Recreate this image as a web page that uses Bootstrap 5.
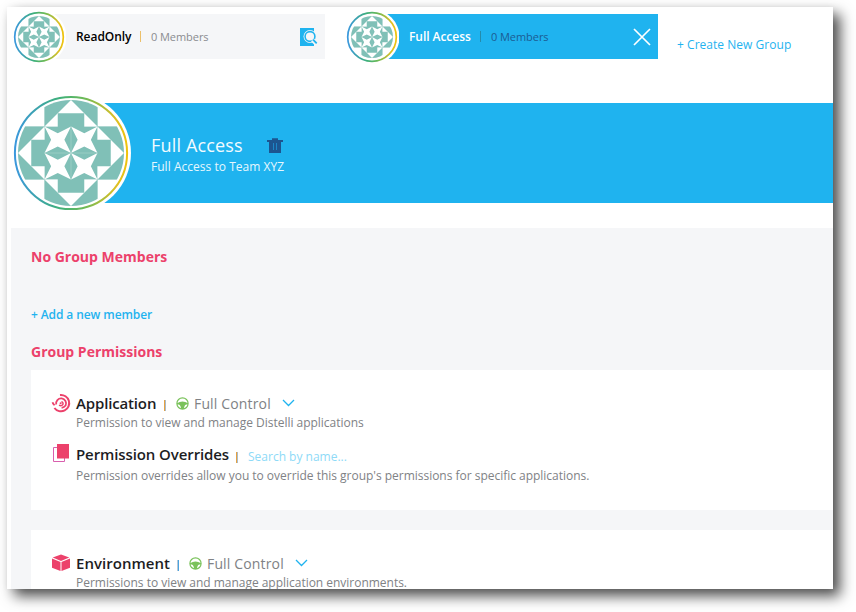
<!DOCTYPE html>
<html lang="en">
<head>
<meta charset="utf-8">
<title>Groups</title>
<link rel="stylesheet" href="https://cdn.jsdelivr.net/npm/bootstrap@5.3.0/dist/css/bootstrap.min.css">
<style>
  body { font: 12px/18px "Open Sans", "Noto Sans", sans-serif; width: 856px; height: 612px; overflow: hidden; background: #fff; color: #808285; white-space: nowrap; }
  .window { width: 826px; height: 582px; margin: 7px; box-shadow: 7px 7px 13px rgba(0,0,0,.7), 0 0 7px rgba(0,0,0,.04); }
  .tabs { height: 60px; padding-left: 5px; }
  .tab-item { height: 60px; }
  .tab-bar { height: 45px; margin: 7px 0 0 -27px; padding-left: 37px; }
  .face-sm { width: 55px; height: 55px; margin: 2px 0 0 -1px; z-index: 1; }
  .tab-one .tab-bar { width: 286px; background: #f5f6f8; color: #8a8c90; }
  .tab-two { margin-left: 20px; }
  .tab-two .tab-bar { width: 286px; background: #1fb3ef; color: #1c5c93; }
  .tab-name { font-weight: 600; width: 64px; letter-spacing: -.05px; }
  .tab-two .tab-name { width: 71px; }
  .tick { width: 1px; height: 11px; background: #ecc06a; }
  .tab-two .tick { background: #258bab; }
  .count { font-size: 11px; margin-left: 10px; letter-spacing: -.06px; }
  .find-icon, .close-icon { margin-right: 7px; }
  .blue { color: #1fb3ef; }
  .create { padding: 29px 0 0 19px; letter-spacing: .03px; }
  .hero { height: 120px; margin-top: 26px; padding-left: 4px; }
  .face-lg { width: 120px; height: 120px; z-index: 1; }
  .hero-bar { height: 100px; margin: 10px 0 0 -62px; padding: 31px 0 0 82px; background: #1fb3ef; }
  .hero-title { font-size: 18px; line-height: 23px; letter-spacing: .17px; color: #f2fbff; }
  .hero-sub { line-height: 20px; letter-spacing: .03px; color: #e6f7fe; }
  .panel { height: 361px; margin: 15px 0 0 4px; padding: 19px 0 0 20px; background: #f5f6f8; overflow: hidden; }
  .heading { font-size: 14px; line-height: 20px; font-weight: 700; color: #ec416b; margin: 0; }
  .add { font-weight: 600; line-height: 20px; margin: 38px 0 17px; letter-spacing: -.1px; }
  .sheet { background: #fff; height: 140px; padding: 24px 0 0 21px; margin-bottom: 20px; }
  .perm-icon { width: 20px; height: 20px; margin: 0 5px 2px -1px; }
  .perm-name { font-size: 15px; line-height: 20px; font-weight: 600; color: #1d1d1f; letter-spacing: -.15px; margin-bottom: 2px; width: 80px; }
  .perm-name.wide { width: 153px; letter-spacing: -.1px; }
  .perm-name.env { width: 94px; letter-spacing: .03px; }
  .perm-row { height: 20px; }
  .perm-row .tick { width: 2px; margin: 2px 10px 0 8px; background: linear-gradient(90deg, #e6a243 50%, #a9bccb 50%); }
  .perm-row .wide + .tick { margin-left: 7px; }
  .perm-row .env + .tick { margin-left: 7px; background: linear-gradient(90deg, #b9c9d6 50%, #4aa3e0 50%); }
  .wheel { width: 13px; height: 13px; margin-bottom: 2px; }
  .chevron { width: 13px; height: 8px; margin-bottom: 2px; }
  .perm-level { font-size: 14px; letter-spacing: .15px; margin: 0 11px 0 5px; }
  .perm-desc { padding-left: 24px; letter-spacing: -.02px; }
  .overrides { margin-top: 13px; }
  .overrides .perm-desc { margin-top: 2px; }
  .search { color: #8edaf7; margin-top: 4px; }
</style>
</head>
<body>
<svg width="0" height="0" class="d-block">
  <defs>
    <linearGradient id="ring" x1="0" y1="0" x2="1" y2="0">
      <stop offset="0" stop-color="#3b98dd"/><stop offset=".4" stop-color="#3fb07a"/><stop offset=".62" stop-color="#6dba57"/><stop offset=".9" stop-color="#dcbf25"/><stop offset="1" stop-color="#efc30d"/>
    </linearGradient>
    <clipPath id="round"><circle cx="8" cy="8" r="8"/></clipPath>
    <g id="quarter">
      <path fill="#80c0b7" d="M4 0h8v4h-8z"/>
      <path fill="#fff" d="M8 0l4 4H4z"/>
      <path fill="#80c0b7" d="M6 2h4v2.2h-4z"/>
    </g>
    <path id="star" fill="#fff" d="M0 0L2 1 4 0 3 2 4 4 2 3 0 4 1 2z"/>
    <g id="quilt" clip-path="url(#round)">
      <path fill="#80c0b7" d="M4 4h8v8h-8z"/>
      <use href="#quarter"/><use href="#quarter" transform="rotate(90 8 8)"/><use href="#quarter" transform="rotate(180 8 8)"/><use href="#quarter" transform="rotate(270 8 8)"/>
      <use href="#star" x="4" y="4"/><use href="#star" x="8" y="4"/><use href="#star" x="4" y="8"/><use href="#star" x="8" y="8"/>
      <path d="M4 0v4M12 0v4M4 12v4M12 12v4M0 4h4M12 4h4M0 12h4M12 12h4M4 8h8M8 4v8" stroke="#a6d3cc" stroke-width=".1"/>
    </g>
    <symbol id="wheel" viewBox="0 0 13 13">
      <circle cx="6.5" cy="6.5" r="5.6" fill="none" stroke="#7ac25b" stroke-width="1.2"/>
      <path fill="#7ac25b" d="M1 6.2Q6.5 2.8 12 6.2V7.6H10.2Q8.2 8.2 7.9 12H5.1Q4.8 8.2 2.8 7.6H1z"/>
    </symbol>
    <symbol id="chevron" viewBox="0 0 13 8"><path d="M1 1l5.5 5.5L12 1" fill="none" stroke="#1fb3ef" stroke-width="1.3"/></symbol>
  </defs>
</svg>

<main class="window bg-white overflow-visible">
  <nav class="tabs d-flex align-items-start">
    <div class="tab-item tab-one d-flex align-items-start">
      <svg class="face-sm position-relative flex-shrink-0" viewBox="0 0 55 55"><circle cx="28" cy="28" r="27.5" fill="#fff"/><circle cx="28" cy="28" r="24.3" fill="none" stroke="url(#ring)" stroke-width="1.7"/><use href="#quilt" transform="translate(7 7) scale(2.625)"/></svg>
      <div class="tab-bar d-flex align-items-center">
        <span class="tab-name text-black">ReadOnly</span><span class="tick"></span><span class="count">0 Members</span>
        <svg class="find-icon ms-auto" width="18" height="18" viewBox="0 0 18 18"><path fill="#1fb3ef" d="M0 0h14v18H0z"/><circle cx="10" cy="8.5" r="6.5" fill="#f5f6f8"/><circle cx="10" cy="8.5" r="4.9" fill="none" stroke="#1fb3ef" stroke-width="1.6"/><path d="M12.5 12l4 4" stroke="#f5f6f8" stroke-width="4"/><path d="M13 11.7l3.7 3.7" stroke="#1fb3ef" stroke-width="1.8"/></svg>
      </div>
    </div>
    <div class="tab-item tab-two d-flex align-items-start">
      <svg class="face-sm position-relative flex-shrink-0" viewBox="0 0 55 55"><circle cx="28" cy="28" r="27.5" fill="#fff"/><circle cx="28" cy="28" r="24.3" fill="none" stroke="url(#ring)" stroke-width="1.7"/><use href="#quilt" transform="translate(7 7) scale(2.625)"/></svg>
      <div class="tab-bar d-flex align-items-center">
        <span class="tab-name text-white">Full Access</span><span class="tick"></span><span class="count">0 Members</span>
        <svg class="close-icon ms-auto" width="18" height="18" viewBox="0 0 18 18"><path d="M1 1l16 16M17 1L1 17" stroke="#fff" stroke-width="1.7"/></svg>
      </div>
    </div>
    <a class="create blue text-decoration-none" href="#">+ Create New Group</a>
  </nav>

  <header class="hero d-flex align-items-start">
    <svg class="face-lg position-relative flex-shrink-0" viewBox="0 0 120 120"><circle cx="60" cy="60" r="60" fill="#fff"/><circle cx="60" cy="60" r="56.1" fill="none" stroke="url(#ring)" stroke-width="2"/><use href="#quilt" transform="translate(7 7) scale(6.625)"/></svg>
    <div class="hero-bar flex-grow-1">
      <div class="d-flex align-items-center">
        <h1 class="hero-title fw-normal m-0">Full Access</h1>
        <svg class="ms-4" width="16" height="15" viewBox="0 0 16 15"><path fill="#1c5590" d="M0 2h5V.3h6V2h5v2h-2v11H2V4H0z"/><path d="M6.5 5v7M9.5 5v7" stroke="#1d86c8" stroke-width="1"/></svg>
      </div>
      <div class="hero-sub">Full Access to Team XYZ</div>
    </div>
  </header>

  <section class="panel">
    <h2 class="heading">No Group Members</h2>
    <a class="add blue d-block text-decoration-none" href="#">+ Add a new member</a>
    <h2 class="heading">Group Permissions</h2>
    <div class="sheet mt-2">
      <div class="perm-row d-flex align-items-center">
        <svg class="perm-icon" viewBox="0 0 20 20" fill="none" stroke="#ec416b" stroke-width="2"><path d="M9 2A8.2 8.2 0 1 1 3.4 15"/><path d="M1.7 9.2Q1.8 11 3.6 12.2"/><path d="M5.2 11.5A5 5 0 1 1 14.6 12.6Q13.2 14.6 10.6 14.9" stroke-width="1.8"/><path d="M8 12.2Q10.4 13.4 11.9 11.5 12.6 9.5 10.4 8.7" stroke-width="1.4"/><circle cx="9.6" cy="10.2" r="1" fill="#ec416b" stroke="none"/></svg>
        <span class="perm-name">Application</span><span class="tick"></span>
        <svg class="wheel"><use href="#wheel"/></svg><span class="perm-level">Full Control</span><svg class="chevron"><use href="#chevron"/></svg>
      </div>
      <div class="perm-desc">Permission to view and manage Distelli applications</div>
      <div class="overrides">
        <div class="perm-row d-flex align-items-center">
          <svg class="perm-icon" viewBox="0 0 20 20"><path d="M2.5 3.5h11v14h-11z" fill="#fff" stroke="#d95fae"/><path d="M6 0h12v14.5H6z" fill="#ec416b"/></svg>
          <span class="perm-name wide">Permission Overrides</span><span class="tick mt-1"></span><span class="search">Search by name...</span>
        </div>
        <div class="perm-desc">Permission overrides allow you to override this group's permissions for specific applications.</div>
      </div>
    </div>
    <div class="sheet">
      <div class="perm-row d-flex align-items-center">
        <svg class="perm-icon" viewBox="0 0 20 20" fill="#ec416b"><path d="M10 1.5l8.3 3L10 8 1.7 4.5zM1 5.5l8.5 3.6v8.9L1 14.7zM19 5.5l-8.5 3.6v8.9L19 14.7z"/></svg>
        <span class="perm-name env">Environment</span><span class="tick"></span>
        <svg class="wheel"><use href="#wheel"/></svg><span class="perm-level">Full Control</span><svg class="chevron"><use href="#chevron"/></svg>
      </div>
      <div class="perm-desc">Permissions to view and manage application environments.</div>
    </div>
  </section>
</main>
<script src="https://cdn.jsdelivr.net/npm/bootstrap@5.3.0/dist/js/bootstrap.bundle.min.js"></script>
</body>
</html>
